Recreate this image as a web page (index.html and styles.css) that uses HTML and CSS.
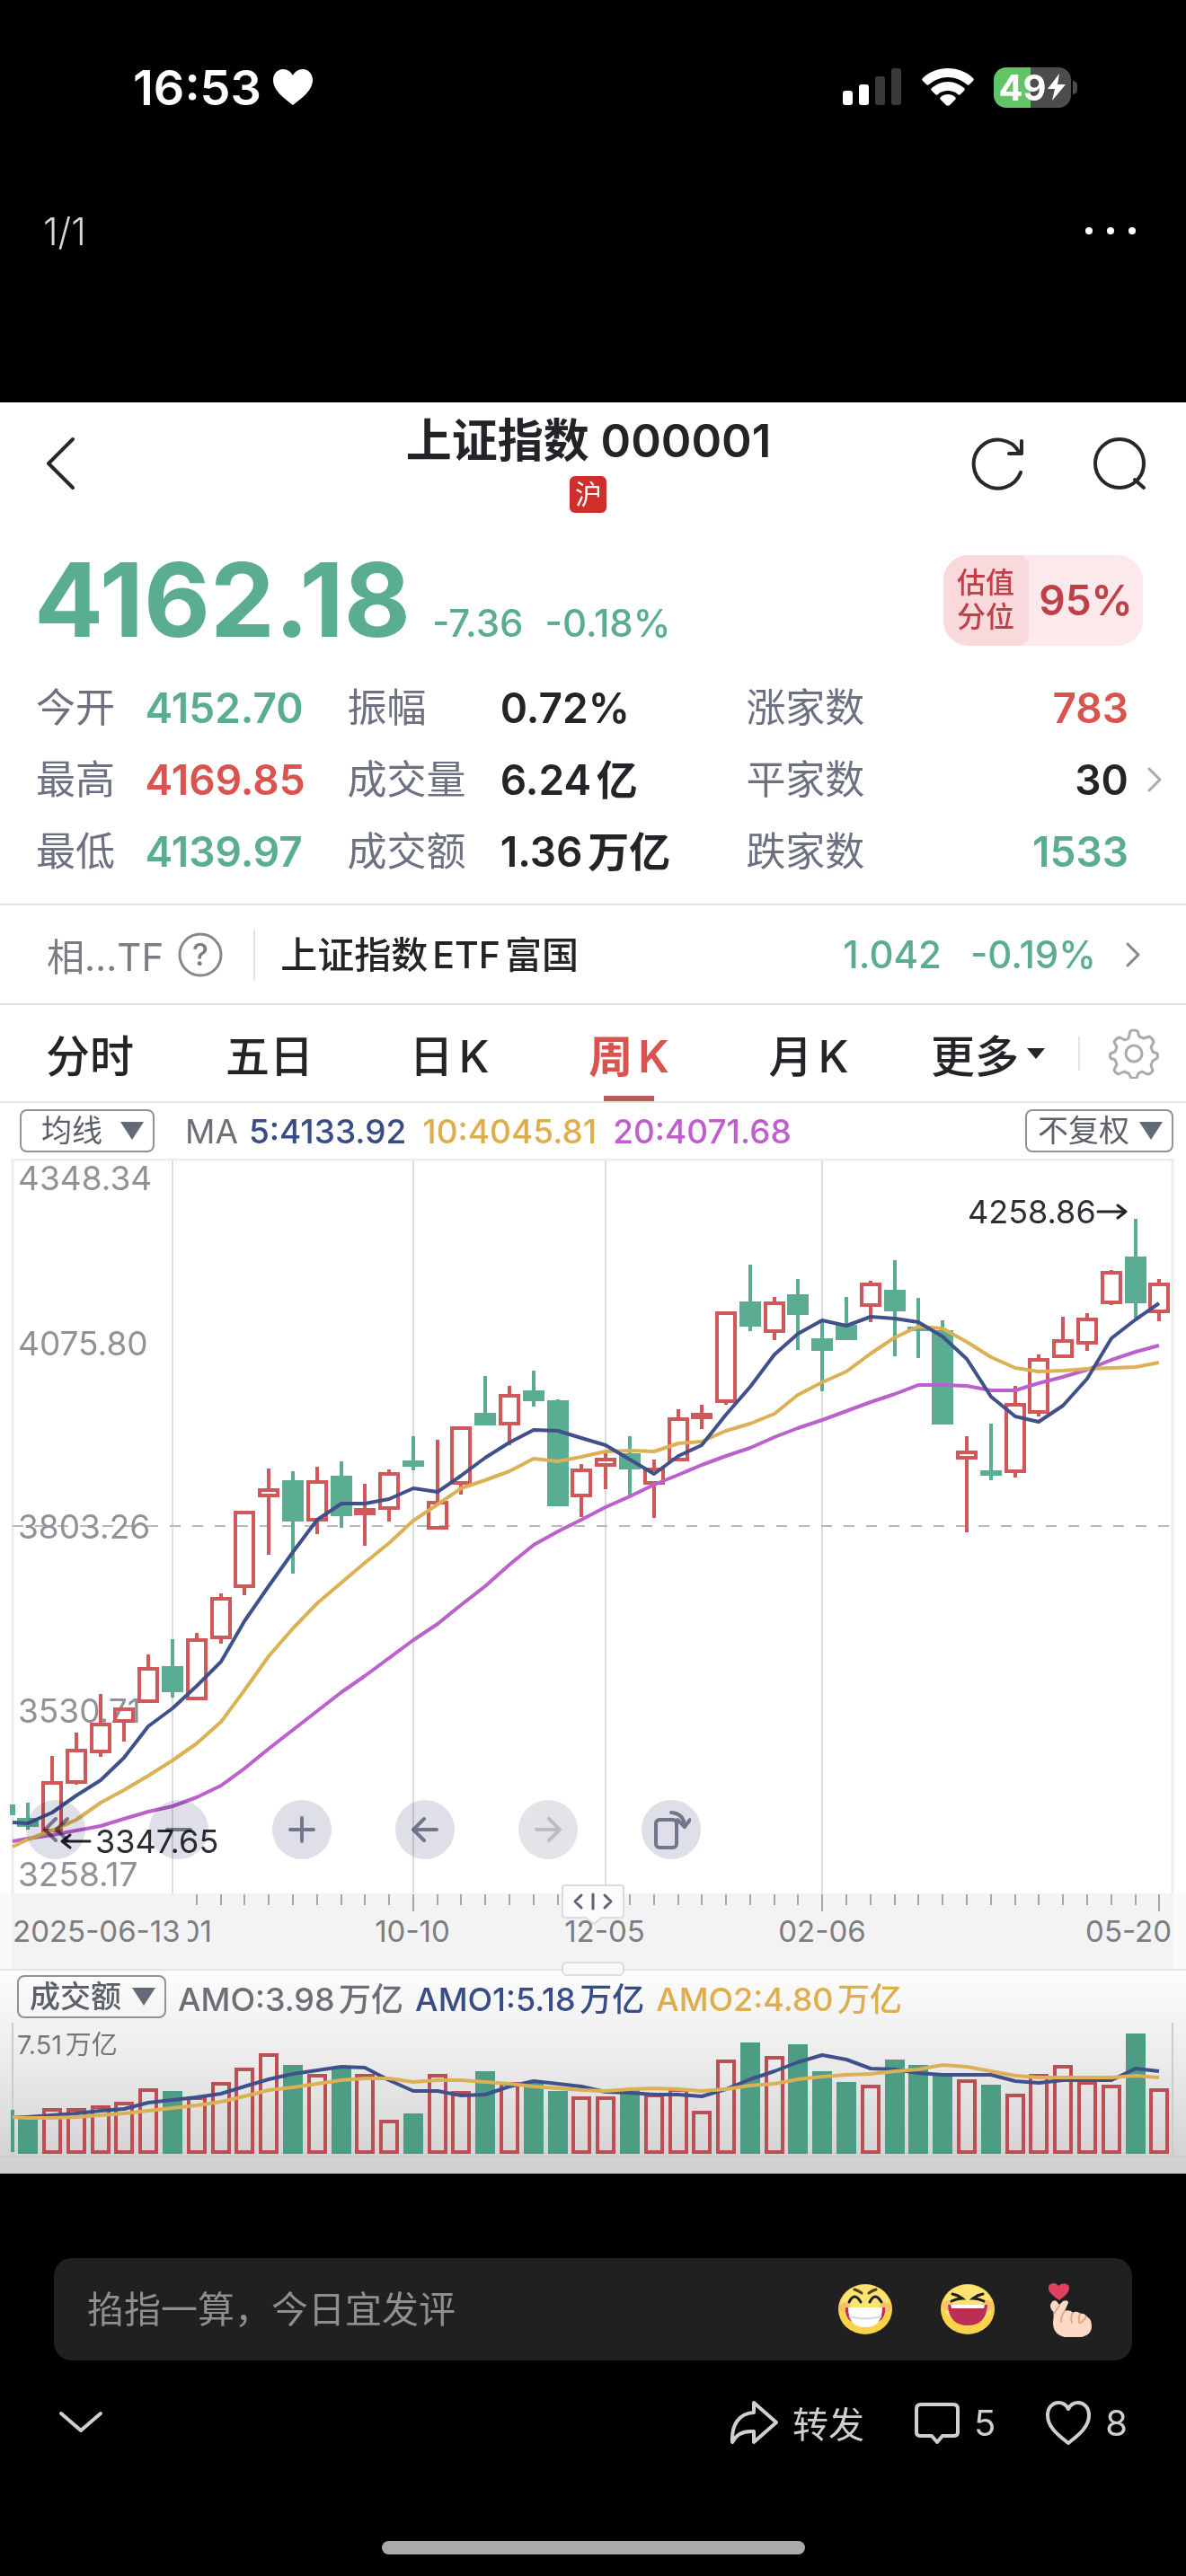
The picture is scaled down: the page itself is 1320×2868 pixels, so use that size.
FILE: index.html
```
<!DOCTYPE html>
<html lang="zh-CN">
<head>
  <meta charset="UTF-8">
  <meta name="viewport" content="width=device-width, initial-scale=1.0">
  <title>上证指数 000001</title>
  <link rel="stylesheet" href="styles.css">
</head>
<body>
  <!-- phone status bar -->
  <div class="status-bar">
    <div class="status-left">
      <span class="clock">16:53</span>
      <svg width="46" height="42" viewBox="0 0 46 42"><path d="M23 41C14 34 1 25 1 13 1 6 6 1 12 1c5 0 9 3 11 7 2-4 6-7 11-7 6 0 11 5 11 12 0 12-13 21-22 28z" fill="#fff"/></svg>
    </div>
    <div class="status-right">
      <svg width="66" height="42" viewBox="0 0 66 42">
        <rect x="0" y="25" width="11" height="16" rx="3" fill="#fff"/>
        <rect x="18" y="18" width="11" height="23" rx="3" fill="#fff"/>
        <rect x="36" y="9" width="11" height="32" rx="3" fill="#3a3a3a"/>
        <rect x="54" y="0" width="11" height="41" rx="3" fill="#3a3a3a"/>
      </svg>
      <svg width="58" height="42" viewBox="0 0 58 42" fill="#fff">
        <path d="M29 0C18 0 8 4 1 11c-1 1-1 2 0 3l4 4c1 1 2 1 3 0 6-5 13-8 21-8s15 3 21 8c1 1 2 1 3 0l4-4c1-1 1-2 0-3C50 4 40 0 29 0z"/>
        <path d="M29 15c-7 0-13 3-18 7-1 1-1 2 0 3l4 4c1 1 2 1 3 0 3-3 7-4 11-4s8 1 11 4c1 1 2 1 3 0l4-4c1-1 1-2 0-3-5-4-11-7-18-7z"/>
        <path d="M29 29c-3 0-6 1-8 3-1 1-1 2 0 3l6 6c1 1 3 1 4 0l6-6c1-1 1-2 0-3-2-2-5-3-8-3z"/>
      </svg>
      <div class="battery">
        <span>49</span>
        <svg width="22" height="32" viewBox="0 0 22 32"><path d="M14 1 1 18h8L6 31 21 13h-9z" fill="#fff"/></svg>
      </div>
    </div>
  </div>

  <div class="viewer-bar">
    <span class="counter">1/1</span>
    <button class="icon-btn" aria-label="更多操作">
      <svg width="60" height="12" viewBox="0 0 60 12" fill="#fff"><circle cx="6" cy="6" r="4"/><circle cx="30" cy="6" r="4"/><circle cx="54" cy="6" r="4"/></svg>
    </button>
  </div>

  <main class="stock">
    <header class="stock-header">
      <button class="icon-btn back" aria-label="返回">
        <svg width="34" height="60" viewBox="0 0 34 60"><path d="M31 3 4 30l27 27" class="line dark"/></svg>
      </button>
      <div class="stock-title">
        <h1>上证指数 000001</h1>
        <span class="market">沪</span>
      </div>
      <div class="header-tools">
        <button class="icon-btn" aria-label="刷新">
          <svg width="60" height="60" viewBox="0 0 60 60"><path d="M55 40A27 27 0 1 1 53 17M56 5v14H42" class="line dark"/></svg>
        </button>
        <button class="icon-btn" aria-label="搜索">
          <svg width="60" height="60" viewBox="0 0 60 60"><circle cx="30" cy="30" r="27" class="line dark"/><path d="m47 48 10 9" class="line dark"/></svg>
        </button>
      </div>
    </header>

    <section class="price-row">
      <div class="price">
        <strong>4162.18</strong>
        <span>-7.36</span>
        <span>-0.18%</span>
      </div>
      <a href="#" class="valuation">
        <span class="valuation-label">估值<br>分位</span>
        <span class="valuation-num">95%</span>
      </a>
    </section>

    <section class="quotes">
      <dl>
        <dt>今开</dt><dd class="down">4152.70</dd>
        <dt>振幅</dt><dd>0.72%</dd>
        <dt>涨家数</dt><dd class="up last">783</dd>
        <dt>最高</dt><dd class="up">4169.85</dd>
        <dt>成交量</dt><dd>6.24亿</dd>
        <dt>平家数</dt><dd class="last">30</dd>
        <dt>最低</dt><dd class="down">4139.97</dd>
        <dt>成交额</dt><dd>1.36万亿</dd>
        <dt>跌家数</dt><dd class="down last">1533</dd>
      </dl>
      <svg width="18" height="30" viewBox="0 0 18 30"><path d="m3 3 12 12L3 27" class="line light"/></svg>
    </section>

    <a href="#" class="etf">
      <span class="etf-tag">相…TF</span>
      <svg width="50" height="50" viewBox="0 0 50 50"><circle cx="25" cy="25" r="23" class="line grey"/><text x="25" y="37" class="help">?</text></svg>
      <span class="etf-name">上证指数ETF富国</span>
      <span class="etf-num">1.042</span>
      <span class="etf-num">-0.19%</span>
      <svg width="18" height="30" viewBox="0 0 18 30"><path d="m3 3 12 12L3 27" class="line grey"/></svg>
    </a>

    <nav class="tabs">
      <button>分时</button>
      <button>五日</button>
      <button>日K</button>
      <button class="active">周K</button>
      <button>月K</button>
      <button class="more">更多<svg width="22" height="14" viewBox="0 0 22 14"><path d="M1 1h20L11 13z" fill="#222428"/></svg></button>
      <button class="settings" aria-label="设置">
        <svg width="56" height="56" viewBox="0 0 56 56">
          <path d="M24 3q4-2 8 0l2 6 5 2 6-2q4 2 5 6l-3 6 2 5 5 2q1 3 0 5l-5 3-2 5 2 6q-2 4-6 4l-6-3-4 2-2 5q-3 1-6 0l-3-5-5-2-6 3q-4-1-5-5l3-6-2-5-5-2q-1-3 0-5l5-2 2-5-3-6q2-4 6-5l6 3 4-2z" class="line light"/>
          <circle cx="28" cy="28" r="9" class="line light"/>
        </svg>
      </button>
    </nav>

    <section class="legend">
      <label class="picker"><select aria-label="指标"><option>均线</option></select></label>
      <p>
        <span class="ma">MA</span>
        <span class="ma5">5:4133.92</span>
        <span class="ma10">10:4045.81</span>
        <span class="ma20">20:4071.68</span>
      </p>
      <label class="picker fq"><select aria-label="复权"><option>不复权</option></select></label>
    </section>

    <section class="kline">
      <svg id="kline" class="chart" viewBox="0 1290 1320 818">
        <path d="M192 1290V2108M460 1290V2108M674 1290V2108M915 1290V2108" class="grid"/>
        <path d="M14 2108V1291H1305V2108" class="grid edge"/>
        <path d="M14 1699H1305" class="grid mid"/>
        <g class="price-label">
          <text x="20" y="1325">4348.34</text>
          <text x="20" y="1509">4075.80</text>
          <text x="20" y="1713">3803.26</text>
          <text x="20" y="1918">3530.71</text>
          <text x="20" y="2100">3258.17</text>
        </g>
        <g id="candles"></g>
        <g id="averages" class="averages"></g>
        <text x="1077" y="1362" class="mark">4258.86</text>
        <path d="M1222 1349h31m-9-7 9 7-9 7" class="line arrow"/>
        <text x="106" y="2063" class="mark">3347.65</text>
        <path d="M100 2050H69m9-7-9 7 9 7" class="line arrow"/>
      </svg>
      <div class="chart-tools">
        <button aria-label="最早"><svg width="36" height="36" viewBox="0 0 36 36"><path d="M18 6 6 18l12 12M31 6 19 18l12 12" class="line tool"/></svg></button>
        <button aria-label="缩小"><svg width="36" height="36" viewBox="0 0 36 36"><path d="M5 18h26" class="line tool"/></svg></button>
        <button aria-label="放大"><svg width="36" height="36" viewBox="0 0 36 36"><path d="M5 18h26M18 5v26" class="line tool"/></svg></button>
        <button aria-label="左移"><svg width="36" height="36" viewBox="0 0 36 36"><path d="M31 18H5M17 6 5 18l12 12" class="line tool"/></svg></button>
        <button aria-label="右移" disabled><svg width="36" height="36" viewBox="0 0 36 36"><path d="M5 18h26M19 6l12 12-12 12" class="line tool"/></svg></button>
        <button aria-label="横屏"><svg width="44" height="44" viewBox="0 0 44 44"><rect x="5" y="11" width="23" height="31" rx="4" class="line tool"/><path d="M22 3q14 1 15 15m-8-7 8 8 6-8" class="line tool"/></svg></button>
      </div>
    </section>

    <section class="axis">
      <svg class="chart" viewBox="0 0 1320 84">
        <rect x="13" y="0" width="1292" height="84" class="band"/>
        <path id="ticks" class="ticks"/>
        <text x="14" y="54">2025-06-13</text>
        <!-- 08-01 is cut off where the first date ends -->
        <svg x="209" y="20" width="50" height="44" viewBox="209 20 50 44"><text x="236" y="54" text-anchor="end">08-01</text></svg>
        <text x="459" y="54" text-anchor="middle">10-10</text>
        <text x="673" y="54" text-anchor="middle">12-05</text>
        <text x="915" y="54" text-anchor="middle">02-06</text>
        <text x="1304" y="54" text-anchor="end">05-20</text>
      </svg>
      <button class="handle" aria-label="拖动">
        <svg width="70" height="46" viewBox="0 0 70 46">
          <path d="M4 1h62q3 0 3 3v30q0 3-3 3H45l-9 7-9-7H4q-3 0-3-3V4q0-3 3-3z" fill="#fbfbfd" stroke="#dcdce0" stroke-width="2"/>
          <path d="m22 12-7 7 7 7M35 11v16M48 12l7 7-7 7" class="line grip"/>
        </svg>
      </button>
      <button class="handle-low" aria-label="调整高度"></button>
    </section>

    <section class="volume">
      <div class="volume-legend">
        <label class="picker vol"><select aria-label="副图指标"><option>成交额</option></select></label>
        <span class="ma">AMO:3.98万亿</span>
        <span class="ma5">AMO1:5.18万亿</span>
        <span class="ma10">AMO2:4.80万亿</span>
      </div>
      <svg class="chart" viewBox="0 0 1320 168">
        <path d="M14 0V149M1305 0V149M0 149H1320" class="grid"/>
        <text x="19" y="35" class="volume-max">7.51万亿</text>
        <g id="bars"></g>
        <g id="bar-averages" class="averages"></g>
      </svg>
    </section>
  </main>

  <footer>
    <div class="comment-box">
      <input type="text" aria-label="评论" placeholder="掐指一算，今日宜发评">
      <button class="icon-btn" aria-label="呲牙">
        <svg width="62" height="62" viewBox="0 0 62 62">
          <ellipse cx="31" cy="31" rx="30" ry="28" fill="#fbd34a"/>
          <ellipse cx="31" cy="26" rx="27" ry="22" fill="#fde472"/>
          <circle cx="9" cy="29" r="6" fill="#f7a86a" opacity=".6"/><circle cx="53" cy="29" r="6" fill="#f7a86a" opacity=".6"/>
          <path d="M9 29h44q1 11-6 15-16 8-32 0Q8 40 9 29z" fill="#c52e50"/>
          <path d="M12 29h38q0 22-19 22T12 29z" fill="#fff"/>
          <path d="M13 39q18 5 36 0" fill="none" stroke="#d9d9de" stroke-width="2"/>
          <path d="M13 23q6-12 13 0M36 23q6-12 13 0" fill="none" stroke="#22201c" stroke-width="3" stroke-linecap="round"/>
          <path d="M19 9q4 1 8 4M43 9q-4 1-8 4" fill="none" stroke="#5a3c1e" stroke-width="3" stroke-linecap="round"/>
        </svg>
      </button>
      <button class="icon-btn" aria-label="大笑">
        <svg width="62" height="62" viewBox="0 0 62 62">
          <ellipse cx="31" cy="31" rx="30" ry="28" fill="#fbd34a"/>
          <ellipse cx="31" cy="26" rx="27" ry="22" fill="#fde472"/>
          <circle cx="9" cy="27" r="6" fill="#f7a86a" opacity=".6"/><circle cx="53" cy="27" r="6" fill="#f7a86a" opacity=".6"/>
          <path d="M9 26h44q-1 23-22 23T9 26z" fill="#bd2f52"/>
          <path d="M12 26h38l-1 4H13z" fill="#fff"/>
          <path d="M14 14q6 1 11 5-6 0-12 3M48 14q-6 1-11 5 6 0 12 3" fill="none" stroke="#22201c" stroke-width="3" stroke-linecap="round"/>
        </svg>
      </button>
      <button class="icon-btn" aria-label="比心">
        <svg width="62" height="62" viewBox="0 0 62 62">
          <path d="M19 21C13 17 6 12 7 6c1-5 9-5 11-1 4-4 12-3 12 2 0 6-6 10-11 14z" fill="#e2405f"/>
          <path d="M10 24q2-4 6-2l3 4 4-4q6-2 6 2l-4 9q6-2 9 2 5-3 8 1 5-1 7 3 6 2 6 11c0 9-8 13-21 13-15 0-22-6-22-17l1-11-3-4q-2-4 0-7z" fill="#fbd9c5"/>
          <path d="M19 27l-6 9M25 33q-4 5-4 12M34 35q-3 5-1 11M42 36q-2 5-1 10M49 39q-2 4-6 7" fill="none" stroke="#e0a68c" stroke-width="2" stroke-linecap="round"/>
        </svg>
      </button>
    </div>
    <div class="actions">
      <button class="collapse" aria-label="收起"><svg width="50" height="26" viewBox="0 0 50 26"><path d="m3 3 22 19L47 3" class="line pale"/></svg></button>
      <button><svg width="54" height="50" viewBox="0 0 54 50"><path d="M27 3 52 25 27 47V35C14 34 7 39 3 47 2 28 10 15 27 14z" class="line pale"/></svg>转发</button>
      <button><svg width="50" height="50" viewBox="0 0 50 50"><path d="M7 5h36q5 0 5 5v26q0 4-5 4H31l-6 7-6-7H7q-5 0-5-4V10q0-5 5-5z" class="line pale"/></svg>5</button>
      <button><svg width="50" height="50" viewBox="0 0 50 50"><path d="M25 48C15 40 2 31 2 17 2 8 8 3 14 3c5 0 9 3 11 7 2-4 6-7 11-7 6 0 12 5 12 14 0 14-13 23-23 31z" class="line pale"/></svg>8</button>
    </div>
    <div class="home-indicator"></div>
  </footer>
  <script src="chart.js"></script>
</body>
</html>
```
FILE: styles.css
```
* { box-sizing: border-box; }
body { margin: 0; background: #000; color: #222428; font-family: Inter, "Noto Sans CJK SC", sans-serif; text-autospace: normal; }
h1, p, dl, dd { margin: 0; }
svg { display: block; flex: none; }
a { color: inherit; text-decoration: none; }
button, input, select { font: inherit; color: inherit; background: none; border: 0; padding: 0; margin: 0; }
.icon-btn { display: block; }

.line { fill: none; stroke-width: 4; stroke-linecap: round; stroke-linejoin: round; }
.dark { stroke: #26282c; }
.grey { stroke: #85878d; stroke-width: 3; }
.light { stroke: #a9abb1; stroke-width: 3; }
.pale { stroke: #cfcfcf; }
.tool { stroke: #73758a; }
.grip { stroke: #5e6270; stroke-width: 3; }
.arrow { stroke: #222428; stroke-width: 3; }

/* status bar */
.status-bar { display: flex; justify-content: space-between; align-items: center; height: 194px; padding: 0 128px 0 148px; color: #fff; }
.status-left, .status-right { display: flex; align-items: center; }
.status-left { gap: 12px; }
.status-right { gap: 22px; }
.clock { font-size: 54px; font-weight: 600; }
.battery { position: relative; display: flex; align-items: center; justify-content: center; width: 86px; height: 45px; border-radius: 14px; background: linear-gradient(90deg, #62c466 48%, #4c4c4e 48%); font-size: 40px; font-weight: 700; }
.battery::after { content: ""; position: absolute; right: -7px; top: 15px; width: 5px; height: 15px; border-radius: 0 5px 5px 0; background: #4c4c4e; }
.viewer-bar { display: flex; justify-content: space-between; align-items: center; height: 126px; margin-bottom: 128px; padding: 0 54px 0 48px; color: #d8d8d8; }
.counter { font-size: 42px; font-weight: 300; }

/* quote */
.stock { background: #fff; }
.stock-header { display: grid; grid-template-columns: 1fr auto 1fr; align-items: center; height: 136px; padding: 0 44px 0 34px; }
.back { margin-left: 16px; }
.stock-title { display: flex; flex-direction: column; align-items: center; gap: 10px; }
.stock-title h1 { font-size: 51px; line-height: 58px; font-weight: 600; }
.market { width: 41px; height: 41px; border-radius: 6px; background: #cf2f29; color: #fff; font-size: 30px; line-height: 40px; text-align: center; }
.header-tools { display: flex; justify-content: flex-end; gap: 75px; }
.price-row { display: flex; justify-content: space-between; align-items: center; height: 120px; margin-top: 24px; padding: 0 48px 0 38px; }
.price { display: flex; align-items: baseline; gap: 24px; color: #5aac92; font-size: 42px; font-weight: 500; }
.price strong { font-size: 114px; line-height: 120px; font-weight: 700; }
.valuation { display: flex; align-items: stretch; width: 222px; height: 101px; border-radius: 28px; overflow: hidden; background: #fce9eb; color: #bf4048; font-weight: 500; }
.valuation-label { width: 95px; padding: 12px 0 0 15px; background: #f9d9dc; border-radius: 0 12px 12px 0; font-size: 32px; line-height: 38px; }
.valuation-num { flex: 1; font-size: 46px; line-height: 101px; font-weight: 600; text-align: center; }
.quotes { display: flex; align-items: center; gap: 20px; margin-top: 20px; padding: 0 26px 18px 40px; }
.quotes dl { flex: 1; display: grid; grid-template-columns: 10% 18.5% 14% 22.5% 13% 22%; font-size: 46px; line-height: 80px; }
.quotes dt { color: #6c7080; font-size: 44px; white-space: nowrap; }
.quotes dd { font-weight: 600; white-space: nowrap; }
.quotes .last { text-align: right; }
.up { color: #d9534f; }
.down { color: #5aac92; }

.etf { display: flex; align-items: center; height: 113px; padding: 0 50px 0 52px; border-top: 2px solid #e4e4e7; border-bottom: 2px solid #e4e4e7; font-size: 42px; font-weight: 500; }
.etf-tag { margin-right: 16px; color: #7b7d84; font-weight: 400; }
.etf .help { fill: #7b7d84; font-size: 34px; text-anchor: middle; }
.etf-name { flex: 1; margin-left: 34px; padding-left: 28px; border-left: 2px solid #e4e4e7; font-size: 41px; line-height: 56px; }
.etf-num { margin-right: 32px; color: #5aac92; }

.tabs { display: flex; height: 109px; border-bottom: 2px solid #e4e4e7; }
.tabs button { position: relative; flex: 1; font-size: 49px; font-weight: 500; white-space: nowrap; }
.tabs .active { color: #d9534f; font-weight: 600; }
.tabs .active::after { content: ""; position: absolute; left: calc(50% - 28px); bottom: 0; width: 56px; height: 6px; background: #bf5a5a; }
.tabs .more { display: flex; align-items: center; justify-content: center; gap: 8px; }
.tabs .settings { flex: 0 0 120px; padding-left: 34px; background: linear-gradient(#e4e4e7, #e4e4e7) 0 50% / 2px 38px no-repeat; }

/* indicator legend */
.legend { display: flex; align-items: center; height: 62px; padding: 0 14px 0 22px; font-size: 37px; }
.legend p { flex: 1; display: flex; gap: 18px; margin-left: 34px; font-weight: 500; white-space: nowrap; }
.picker { position: relative; width: 150px; height: 48px; border: 2px solid #909298; border-radius: 8px; color: #5c6068; font-size: 34px; }
.picker select { width: 100%; height: 44px; padding-left: 22px; line-height: 44px; appearance: none; }
.picker::after { content: ""; position: absolute; right: 10px; top: 12px; border: 13px solid transparent; border-top: 20px solid #646978; border-bottom: 0; pointer-events: none; }
.picker.fq { width: 165px; }
.picker.fq select, .picker.vol select { padding-left: 12px; }
.picker.vol { width: 166px; }
.legend .ma { font-weight: 400; margin-right: -6px; }
.ma { color: #6c6f76; }
.ma5 { color: #384c86; }
.ma10 { color: #dfae4c; }
.ma20 { color: #c05fcb; }

/* charts */
.chart { width: 100%; height: auto; }
.kline, .axis { position: relative; }
.grid { fill: none; stroke: #dcdcdf; stroke-width: 2; }
.edge { stroke: #ececee; stroke-width: 3; }
.mid { stroke: #b9b9b9; stroke-dasharray: 12 13; }
.price-label { fill: #909297; font-size: 37px; }
.mark { fill: #2c2e33; font-size: 36px; }
.rise { fill: none; stroke: #d0575a; stroke-width: 4; }
.rise.flat { fill: #df4440; }
.fall { fill: #5aac92; stroke: #5aac92; stroke-width: 4; }
.averages { fill: none; stroke-width: 4; stroke-linejoin: round; }
.averages .ma5 { stroke: #40508a; }
.averages .ma10 { stroke: #dcb055; }
.averages .ma20 { stroke: #bb60cc; }
.chart-tools { position: absolute; left: 29px; bottom: 38px; display: flex; gap: 71px; }
.chart-tools button { display: flex; align-items: center; justify-content: center; width: 66px; height: 66px; border-radius: 50%; background: #dfdfe8; mix-blend-mode: multiply; }
.chart-tools button:disabled { background: #e3e3e8; }
.chart-tools button:disabled svg { opacity: .35; }
.axis { background: #fafafa; }
.axis text { fill: #7b7d84; font-size: 33px; }
.band { fill: #f3f3f4; }
.ticks { fill: none; stroke: #a5a6aa; stroke-width: 2; }
.handle { position: absolute; left: calc(50% - 35px); top: -10px; }
.handle-low { position: absolute; left: calc(50% - 35px); bottom: -8px; width: 70px; height: 16px; border: 2px solid #dcdce0; border-radius: 6px; background: #f8f8fa; }

.volume { background: linear-gradient(#fdfdfd, #ebebec 45%, #cfcfd0); border-top: 2px solid #e4e4e7; }
.volume-legend { display: flex; align-items: center; gap: 13px; height: 58px; padding-left: 19px; font-size: 36px; font-weight: 500; white-space: nowrap; }
.volume .grid { stroke: #cbcbcd; }
.volume-max { fill: #75777d; font-size: 29px; }
.volume .rise { stroke: #bb4f54; }
.volume .fall { fill: #4d9d84; stroke: #4d9d84; }

/* comment area */
.comment-box { display: flex; align-items: center; gap: 52px; height: 114px; margin: 94px 60px 0; padding: 0 38px 0 37px; border-radius: 20px; background: #202020; }
.comment-box input { flex: 1; min-width: 0; font-size: 41px; color: #ddd; outline: 0; }
.comment-box input::placeholder { color: #8f8f8f; opacity: 1; }
.actions { display: flex; align-items: center; gap: 56px; height: 70px; margin-top: 34px; padding: 0 65px; color: #cfcfcf; font-size: 40px; }
.actions button { display: flex; align-items: center; gap: 16px; }
.actions .collapse { margin-right: auto; }
.home-indicator { width: 471px; height: 15px; margin: 97px auto 0; border-radius: 8px; background: #aaa; }
```
FILE: chart.js
```
// [high, body top, body bottom, low, rise]
const weeks = [
  [2007, 2024, 2034, 2037, 0], [1955, 1983, 2040, 2040, 1], [1929, 1947, 1986, 1987, 1], [1886, 1918, 1952, 1956, 1],
  [1901, 1901, 1918, 1939, 1], [1842, 1856, 1896, 1896, 1], [1825, 1855, 1884, 1890, 0], [1818, 1824, 1893, 1893, 1],
  [1774, 1778, 1825, 1830, 1], [1682, 1682, 1768, 1776, 1], [1635, 1657, 1667, 1731, 1], [1638, 1648, 1694, 1752, 0],
  [1633, 1648, 1694, 1708, 1], [1627, 1643, 1688, 1701, 0], [1652, 1679, 1687, 1721, 1], [1636, 1639, 1681, 1694, 1],
  [1599, 1626, 1633, 1637, 0], [1603, 1671, 1703, 1703, 1], [1588, 1588, 1653, 1664, 1], [1532, 1573, 1587, 1587, 0],
  [1543, 1552, 1587, 1609, 1], [1526, 1548, 1560, 1566, 0], [1558, 1559, 1677, 1677, 0], [1630, 1635, 1667, 1689, 1],
  [1617, 1623, 1633, 1658, 1], [1599, 1618, 1636, 1665, 0], [1625, 1634, 1653, 1690, 1], [1569, 1578, 1627, 1627, 1],
  [1564, 1573, 1580, 1591, 1], [1460, 1460, 1562, 1564, 1], [1408, 1449, 1477, 1482, 0], [1444, 1449, 1484, 1492, 1],
  [1424, 1441, 1464, 1503, 0], [1472, 1490, 1504, 1549, 0], [1444, 1475, 1492, 1492, 0], [1426, 1428, 1455, 1472, 1],
  [1403, 1436, 1460, 1510, 0], [1445, 1477, 1482, 1512, 0], [1470, 1481, 1586, 1586, 0], [1599, 1615, 1625, 1706, 1],
  [1585, 1637, 1643, 1648, 0], [1543, 1562, 1640, 1645, 1], [1508, 1512, 1574, 1577, 1], [1466, 1491, 1512, 1512, 1],
  [1462, 1467, 1497, 1504, 1], [1414, 1415, 1452, 1453, 1], [1357, 1399, 1451, 1467, 0], [1424, 1428, 1462, 1471, 1]
];

const averages = {
  ma20: [2047, 2043, 2038, 2033, 2025, 2017, 2011, 2001, 1988, 1969, 1947, 1926, 1905, 1884, 1866, 1846, 1826, 1808, 1787, 1766, 1742, 1720, 1705, 1692, 1678, 1666, 1653, 1642, 1631, 1621, 1612, 1600, 1590, 1581, 1571, 1561, 1552, 1542, 1542, 1543, 1548, 1548, 1540, 1533, 1525, 1514, 1505, 1498],
  ma10: [2048, 2038, 2026, 2007, 1993, 1977, 1960, 1941, 1917, 1882, 1844, 1813, 1785, 1762, 1740, 1718, 1693, 1675, 1657, 1648, 1638, 1624, 1627, 1622, 1616, 1615, 1616, 1607, 1605, 1593, 1585, 1574, 1553, 1539, 1527, 1507, 1489, 1477, 1479, 1494, 1511, 1523, 1527, 1526, 1524, 1523, 1522, 1517],
  ma5: [2030, 2018, 1999, 1982, 1957, 1922, 1902, 1877, 1850, 1805, 1766, 1728, 1692, 1674, 1674, 1669, 1657, 1661, 1643, 1623, 1606, 1592, 1593, 1601, 1609, 1625, 1641, 1621, 1609, 1575, 1544, 1508, 1485, 1470, 1476, 1466, 1468, 1472, 1488, 1513, 1555, 1577, 1583, 1565, 1535, 1490, 1469, 1451]
};

// turnover and its averages, in thirds of a chart unit
const turnover = [121, 153, 153, 163, 173, 220, 211, 193, 239, 287, 335, 296, 268, 286, 268, 115, 134, 268, 211, 277, 239, 236, 211, 192, 192, 220, 200, 220, 143, 316, 373, 326, 365, 277, 239, 230, 316, 296, 263, 249, 230, 201, 268, 296, 243, 230, 402, 220];
const turnoverAverages = {
  ma5: [123, 128, 135, 143, 151, 170, 181, 188, 201, 225, 250, 268, 280, 292, 287, 246, 210, 210, 195, 197, 225, 243, 233, 225, 208, 203, 198, 199, 191, 216, 250, 275, 305, 331, 315, 284, 282, 271, 264, 265, 265, 243, 237, 245, 246, 247, 284, 277],
  ma10: [120, 120, 122, 130, 135, 143, 153, 162, 175, 191, 213, 223, 235, 245, 253, 251, 239, 246, 245, 240, 235, 226, 220, 212, 210, 216, 220, 216, 211, 216, 228, 235, 250, 258, 264, 267, 275, 283, 297, 291, 276, 262, 255, 254, 255, 255, 262, 256]
};

const step = 26.787;
const x = i => Math.round(31.3 + i * step);
const line = (name, start, ys) => `<path class="${name}" d="M14 ${start}L${ys.map((y, i) => x(i) + ' ' + y).join('L')}"/>`;

function candle([high, top, bottom, low, rise], i) {
  const flat = i === 28 ? ' flat' : '';
  return `<path class="${rise ? 'rise' : 'fall'}${flat}" d="M${x(i)} ${high}V${top + 2}M${x(i)} ${bottom - 2}V${low}M${x(i) - 10} ${top + 2}h20V${bottom - 2}h-20z"/>`;
}

function bar(value, i) {
  const top = Math.round(146 - value / 3) + 2;
  return `<path class="${weeks[i][4] ? 'rise' : 'fall'}" d="M${x(i) - 9} ${top}h18V144h-18z"/>`;
}

document.getElementById('candles').innerHTML =
  '<path class="fall" d="M13 2011h2v8h-2z"/>' + weeks.map(candle).join('');
document.getElementById('averages').innerHTML =
  line('ma20', 2050, averages.ma20) + line('ma10', 2056, averages.ma10) + line('ma5', 2029, averages.ma5);

document.getElementById('bars').innerHTML =
  '<path class="fall" d="M14 97V144"/>' + turnover.map(bar).join('');
document.getElementById('bar-averages').innerHTML =
  ['ma5', 'ma10'].map(name => line(name, 105, turnoverAverages[name].map(v => Math.round(146 - v / 3)))).join('');

// long ticks stand under the dated weeks
let ticks = '';
for (let i = 7; i < weeks.length; i++) {
  ticks += `M${x(i)} 1V${[16, 33, 47].includes(i) ? 20 : 13}`;
}
document.getElementById('ticks').setAttribute('d', ticks);
```
